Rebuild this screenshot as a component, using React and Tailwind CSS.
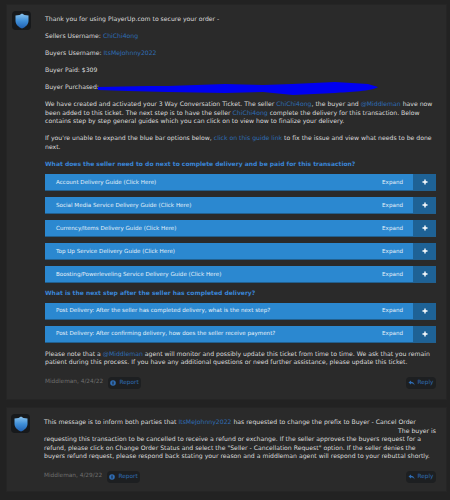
const guides = [
  'Account Delivery Guide (Click Here)',
  'Social Media Service Delivery Guide (Click Here)',
  'Currency/Items Delivery Guide (Click Here)',
  'Top Up Service Delivery Guide (Click Here)',
  'Boosting/Powerleveling Service Delivery Guide (Click Here)',
];

const postGuides = [
  'Post Delivery: After the seller has completed delivery, what is the next step?',
  'Post Delivery: After confirming delivery, how does the seller receive payment?',
];

function Shield() {
  return (
    <div className="w-[19px] h-[19px] bg-[#17191b] rounded-sm flex items-center justify-center shrink-0">
      <svg width="14" height="16" viewBox="0 0 14 16">
        <defs>
          <linearGradient id="sh" x1="0" y1="0" x2="0" y2="1">
            <stop offset="0" stopColor="#8cc4ee" />
            <stop offset="0.5" stopColor="#3f8fd8" />
            <stop offset="1" stopColor="#1f5fb0" />
          </linearGradient>
        </defs>
        <path d="M7 0.5 L9.5 2 L13.5 2.5 L13.5 8 C13.5 11.5 10 14.5 7 15.5 C4 14.5 0.5 11.5 0.5 8 L0.5 2.5 L4.5 2 Z" fill="url(#sh)" />
      </svg>
    </div>
  );
}

function Name({ children }) {
  return <span className="text-[#2f6db5]">{children}</span>;
}

function Bar({ label, last }) {
  return (
    <div className={`flex items-stretch h-[17px] bg-[#2b88d0] border-b border-[#22608f] text-[5.6px] text-[#e4f0f9] ${last ? '' : 'mb-[6px]'}`}>
      <div className="flex-1 pl-[11px] flex items-center whitespace-nowrap">{label}</div>
      <div className="pr-[10px] flex items-center">Expand</div>
      <div className="w-[23px] bg-[#1e6296] flex items-center justify-center text-white">
        <svg width="6" height="6" viewBox="0 0 6 6"><path d="M3 0.5V5.5M0.5 3H5.5" stroke="#fff" strokeWidth="1.4" /></svg>
      </div>
    </div>
  );
}

function Footer({ date }) {
  return (
    <div className="flex items-center justify-between text-[5.8px]">
      <div className="flex items-center">
        <span className="text-[#6f6f6f] mr-[5px] -mt-[3px]">Middleman, {date}</span>
        <span className="w-[33px] h-[12px] bg-[#1d1f21] rounded-sm flex items-center justify-center gap-[3px] text-[#2f6db5]">
          <svg width="6" height="6" viewBox="0 0 6 6"><circle cx="3" cy="3" r="2.8" fill="#2f6db5" /><path d="M3 1.5V4.5" stroke="#1d1f21" strokeWidth="1" /></svg>
          Report
        </span>
      </div>
      <span className="w-[30px] h-[12px] bg-[#1d1f21] rounded-sm flex items-center justify-center gap-[2px] text-[#2f6db5]">
        <svg width="7" height="6" viewBox="0 0 7 6"><path d="M3 0.5 L0.5 2.5 L3 4.5 V3.2 C5 3.2 5.8 4 6.5 5.5 C6.4 3 5 1.8 3 1.8 Z" fill="#2f6db5" /></svg>
        Reply
      </span>
    </div>
  );
}

export default function App() {
  return (
    <div className="w-[450px] h-[500px] overflow-hidden bg-[#222222] pt-[4px] pl-[6px] pr-[3px] font-['DejaVu_Sans',sans-serif] text-[6.15px] leading-[8.5px] text-[#dcdcdc]">
      {/* first post */}
      <div className="h-[396px] bg-[#2a2a2a] border border-[#252525] flex pt-[6px] pl-[5px] pr-[10px]">
        <div className="w-[33px] shrink-0"><Shield /></div>
        <div className="flex-1 min-w-0 pt-[4px]">
          <p className="mb-[8.5px]">Thank you for using PlayerUp.com to secure your order -</p>
          <p className="mb-[8.5px]">Sellers Username: <Name>ChiChi4ong</Name></p>
          <p className="mb-[8.5px]">Buyers Username: <Name>ItsMeJohnny2022</Name></p>
          <p className="mb-[8.5px]">Buyer Paid: $309</p>
          <p className="mb-[8.5px] relative">
            Buyer Purchased:
            <svg className="absolute left-[53px] -top-[3px]" width="282" height="16" viewBox="0 0 282 16">
              <path d="M0 7 L50 6 L70 6 L127 4 L165 5 L194 4 L237 2 L270 4 L280 7 C275 11 250 12 237 13 L195 15 L165 12 L127 13 L70 12 L30 11 L0 10 Z" fill="#0000f0" />
            </svg>
          </p>
          <p className="mb-[8.5px]">We have created and activated your 3 Way Conversation Ticket. The seller <Name>ChiChi4ong</Name>, the buyer and <Name>@Middleman</Name> have now<br />been added to this ticket. The next step is to have the seller <Name>ChiChi4ong</Name> complete the delivery for this transaction. Below<br />contains step by step general guides which you can click on to view how to finalize your delivery.</p>
          <p className="mb-[8.5px]">If you're unable to expand the blue bar options below, <Name>click on this guide link</Name> to fix the issue and view what needs to be done<br />next.</p>
          <p className="mb-[6px] text-[6px] font-bold text-[#3a85d6]">What does the seller need to do next to complete delivery and be paid for this transaction?</p>
          {guides.map((g, i) => <Bar key={i} label={g} last={i === guides.length - 1} />)}
          <p className="mt-[6px] mb-[5px] text-[6px] font-bold text-[#3a85d6]">What is the next step after the seller has completed delivery?</p>
          {postGuides.map((g, i) => <Bar key={i} label={g} last={i === postGuides.length - 1} />)}
          <p className="mt-[7px] mb-[10px]">Please note that a <Name>@Middleman</Name> agent will monitor and possibly update this ticket from time to time. We ask that you remain<br />patient during this process. If you have any additional questions or need further assistance, please update this ticket.</p>
          <Footer date="4/24/22" />
        </div>
      </div>

      {/* second post */}
      <div className="h-[85px] mt-[7px] bg-[#2a2a2a] border border-[#252525] flex pt-[6px] pl-[4px] pr-[10px]">
        <div className="w-[33px] shrink-0"><Shield /></div>
        <div className="flex-1 min-w-0 pt-[4px]">
          <p>This message is to inform both parties that <Name>ItsMeJohnny2022</Name> has requested to change the prefix to Buyer - Cancel Order</p>
          <p className="text-right">The buyer is</p>
          <p className="mb-[10px]">requesting this transaction to be cancelled to receive a refund or exchange. If the seller approves the buyers request for a<br />refund, please click on Change Order Status and select the "Seller - Cancellation Request" option. If the seller denies the<br />buyers refund request, please respond back stating your reason and a middleman agent will respond to your rebuttal shortly.</p>
          <Footer date="4/29/22" />
        </div>
      </div>
    </div>
  );
}
